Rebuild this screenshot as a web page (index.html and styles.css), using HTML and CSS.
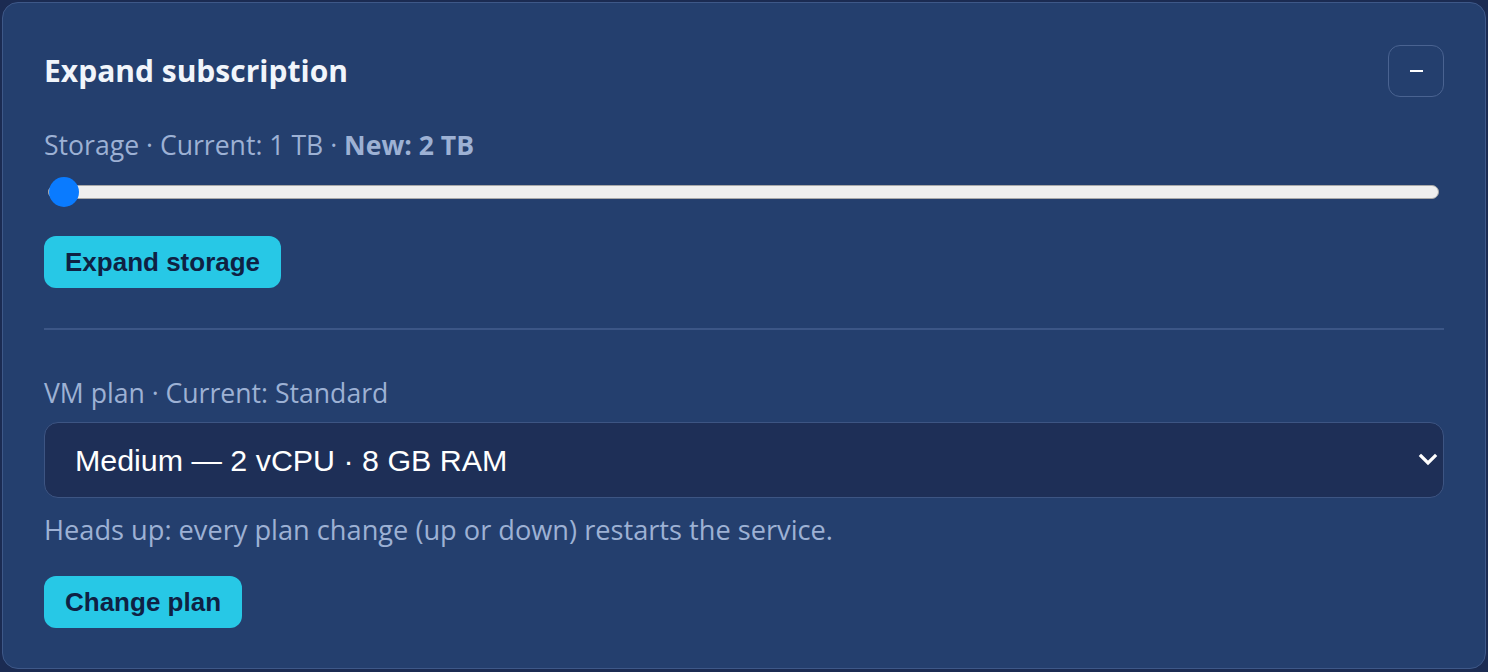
FILE: index.html
```html
<!DOCTYPE html>
<html lang="en">
<head>
<meta charset="utf-8">
<title>Expand subscription</title>
<link rel="stylesheet" href="styles.css">
</head>
<body>
<section class="card">
  <header class="card-head">
    <h2 class="title">Expand subscription</h2>
    <button class="collapse" type="button" aria-label="Collapse"><span class="minus"></span></button>
  </header>

  <div class="block">
    <div class="label label-first">Storage · Current: 1 TB · <strong>New: 2 TB</strong></div>
    <input class="range" type="range" min="2" max="16" value="2">
    <button class="btn" type="button">Expand storage</button>
  </div>

  <hr class="divider">

  <div class="block">
    <div class="label label-second">VM plan · Current: Standard</div>
    <div class="select-wrap">
      <select class="select">
        <option>Medium — 2 vCPU · 8 GB RAM</option>
        <option>Large — 4 vCPU · 16 GB RAM</option>
      </select>
      <svg class="chev" width="20" height="14" viewBox="0 0 20 14"><path d="M3 3 L10 10 L17 3" fill="none" stroke="#ffffff" stroke-width="3.2" stroke-linecap="square"/></svg>
    </div>
    <p class="hint">Heads up: every plan change (up or down) restarts the service.</p>
    <button class="btn btn-last" type="button">Change plan</button>
  </div>
</section>
</body>
</html>
```

FILE: styles.css
```css
html, body {
  margin: 0;
  padding: 0;
}
body {
  background: #1b2b52;
  padding: 2px;
  height: 672px;
  box-sizing: border-box;
  font-family: "Open Sans", "Noto Sans", sans-serif;
}
.card {
  box-sizing: border-box;
  width: 1484px;
  height: 667px;
  background: #243f6e;
  border: 1px solid #3e5888;
  border-radius: 16px;
  padding: 41px 41px 40px;
  display: flex;
  flex-direction: column;
}
.card-head {
  display: flex;
  align-items: center;
  justify-content: space-between;
  height: 54px;
}
.title {
  margin: 0;
  color: #f1f5fb;
  font-size: 30px;
  line-height: 40px;
  font-weight: 700;
}
.collapse {
  width: 56px;
  height: 52px;
  box-sizing: border-box;
  border: 1px solid #4a6391;
  border-radius: 12px;
  background: transparent;
  display: flex;
  align-items: center;
  justify-content: center;
  padding: 0;
  cursor: pointer;
}
.minus {
  display: block;
  width: 13px;
  height: 2px;
  background: #ffffff;
}
.block {
  display: flex;
  flex-direction: column;
  align-items: flex-start;
}
.label {
  color: #9db1d4;
  font-size: 26.6px;
  line-height: 36px;
}
.label-first {
  margin-top: 29px;
}
.label-second {
  margin-top: 45px;
}
.label strong {
  font-weight: 700;
}
.range {
  -webkit-appearance: none;
  appearance: none;
  width: 1391px;
  margin: 13px 0 0 4px;
  height: 32px;
  background: transparent;
}
.range::-webkit-slider-runnable-track {
  height: 14px;
  box-sizing: border-box;
  background: #efefef;
  border: 1px solid #a9a9a9;
  border-radius: 7px;
}
.range::-webkit-slider-thumb {
  -webkit-appearance: none;
  appearance: none;
  width: 30px;
  height: 30px;
  margin-top: -9px;
  border-radius: 50%;
  background: #0a7bff;
  border: none;
}
.btn {
  margin-top: 28px;
  height: 52px;
  padding: 0 21px;
  border: none;
  border-radius: 12px;
  background: #27c8e6;
  color: #0f2143;
  font-family: "Liberation Sans", Arial, sans-serif;
  font-size: 26px;
  font-weight: 700;
  cursor: pointer;
}
.divider {
  width: 100%;
  margin: 40px 0 0;
  border: none;
  height: 2px;
  background: #3c5686;
}
.select-wrap {
  position: relative;
  width: 100%;
  margin-top: 11px;
}
.select {
  -webkit-appearance: none;
  appearance: none;
  width: 100%;
  height: 76px;
  box-sizing: border-box;
  background: #1e2f57;
  border: 1px solid #3d5583;
  border-radius: 14px;
  color: #ffffff;
  font-family: "Liberation Sans", Arial, sans-serif;
  font-size: 30.4px;
  padding: 0 30px;
}
.chev {
  position: absolute;
  right: 6px;
  top: 31px;
}
.hint {
  margin: 14px 0 0;
  color: #9db1d4;
  font-size: 27.2px;
  line-height: 36px;
  font-weight: 400;
}
.btn-last {
  margin-top: 28px;
}
```
